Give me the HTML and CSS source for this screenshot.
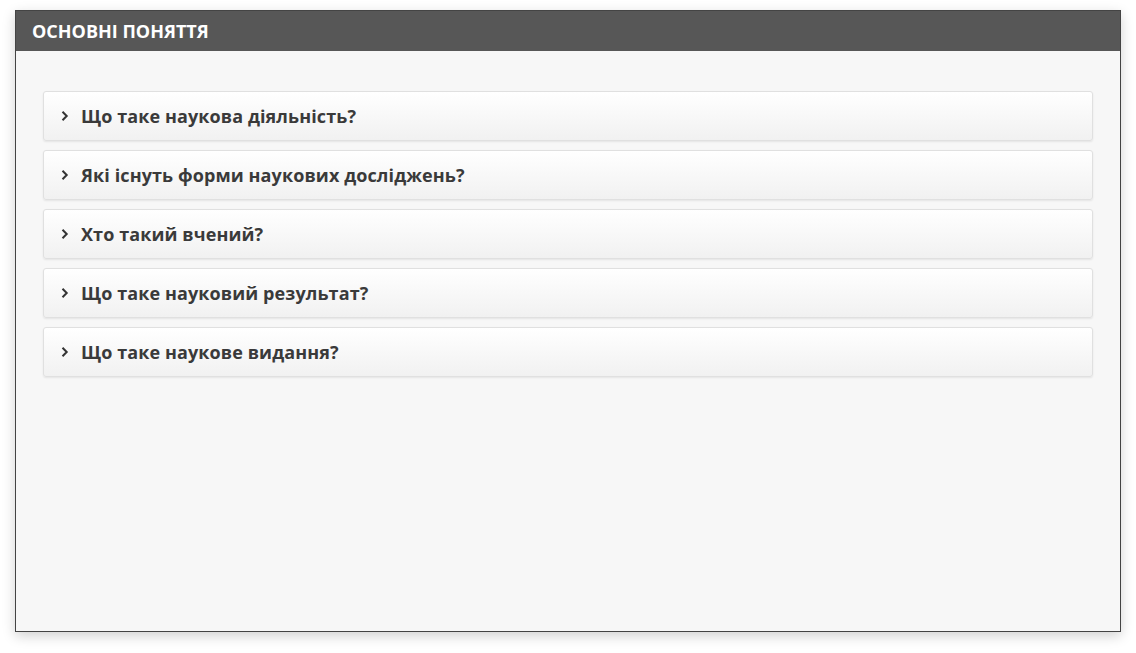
FILE: index.html
```html
<!DOCTYPE html>
<html lang="uk">
<head>
<meta charset="utf-8">
<title>Основні поняття</title>
<link rel="stylesheet" href="styles.css">
</head>
<body>
<div class="panel">
  <div class="panel-header">ОСНОВНІ ПОНЯТТЯ</div>
  <div class="panel-body">
    <div class="item"><svg class="chev" width="9" height="14" viewBox="0 0 9 14"><path d="M2.5 2.8 L6.7 7 L2.5 11.2" fill="none" stroke="#333" stroke-width="2"/></svg><span>Що таке наукова діяльність?</span></div>
    <div class="item"><svg class="chev" width="9" height="14" viewBox="0 0 9 14"><path d="M2.5 2.8 L6.7 7 L2.5 11.2" fill="none" stroke="#333" stroke-width="2"/></svg><span>Які існуть форми наукових досліджень?</span></div>
    <div class="item"><svg class="chev" width="9" height="14" viewBox="0 0 9 14"><path d="M2.5 2.8 L6.7 7 L2.5 11.2" fill="none" stroke="#333" stroke-width="2"/></svg><span>Хто такий вчений?</span></div>
    <div class="item"><svg class="chev" width="9" height="14" viewBox="0 0 9 14"><path d="M2.5 2.8 L6.7 7 L2.5 11.2" fill="none" stroke="#333" stroke-width="2"/></svg><span>Що таке науковий результат?</span></div>
    <div class="item"><svg class="chev" width="9" height="14" viewBox="0 0 9 14"><path d="M2.5 2.8 L6.7 7 L2.5 11.2" fill="none" stroke="#333" stroke-width="2"/></svg><span>Що таке наукове видання?</span></div>
  </div>
</div>
</body>
</html>
```
FILE: styles.css
```css
html, body {
  margin: 0;
  padding: 0;
  background: #ffffff;
}
body {
  padding: 10px 15px 21px 15px;
  font-family: "Open Sans", "Noto Sans", sans-serif;
}
.panel {
  height: 622px;
  border: 1px solid #444;
  background: #f7f7f7;
  box-shadow: 0 4px 12px rgba(0,0,0,0.18);
  display: flex;
  flex-direction: column;
  box-sizing: border-box;
}
.panel-header {
  background: #575757;
  color: #fff;
  font-weight: 700;
  font-size: 18px;
  height: 40px;
  line-height: 40px;
  padding-left: 16px;
}
.panel-body {
  padding: 40px 27px 0 27px;
  display: flex;
  flex-direction: column;
  gap: 9px;
}
.item {
  height: 50px;
  box-sizing: border-box;
  border: 1px solid #e0e0e0;
  border-radius: 3px;
  background: linear-gradient(#ffffff, #f1f1f1);
  box-shadow: 0 1px 2px rgba(0,0,0,0.08);
  display: flex;
  align-items: center;
  padding-left: 16px;
  color: #3a3a3a;
  font-weight: 700;
  font-size: 18px;
  letter-spacing: 0.1px;
}
.chev {
  margin-right: 12px;
  flex: none;
}
```
